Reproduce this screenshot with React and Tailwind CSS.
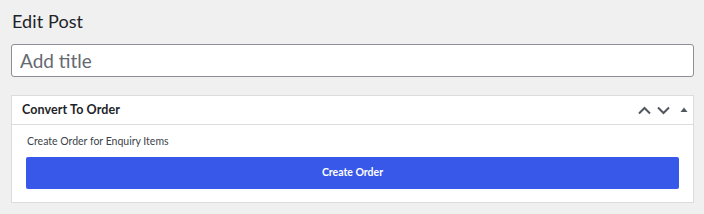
import React from 'react';

export default function App() {
  return (
    <main className="min-h-[214px] bg-[#f0f0f1] px-[11px] pt-[9px] font-['Lato',sans-serif]">
      <h1 className="text-[18px] leading-[24px] text-[#1d2327] pl-px tracking-[0.1px]">Edit Post</h1>

      <input
        type="text"
        placeholder="Add title"
        className="mt-[11px] block w-[683px] h-[33px] border border-[#8c8f94] rounded-[3px] bg-white px-[8px] text-[19px] text-[#1d2327] placeholder:text-[#646970] outline-none"
      />

      <section className="mt-[18px] w-[683px] border border-[#dcdcde] bg-white">
        <div className="flex items-center h-[29px] border-b border-[#dcdcde] pl-[10px] pr-[5px]">
          <h2 className="text-[12.5px] font-bold text-[#1d2327] tracking-[0.1px]">Convert To Order</h2>
          <div className="ml-auto flex items-center text-[#50575e]">
            <svg width="13" height="13" viewBox="0 0 13 13" fill="none" stroke="currentColor" strokeWidth="2">
              <path d="M1 9.5 6.5 4l5.5 5.5" />
            </svg>
            <svg width="13" height="13" viewBox="0 0 13 13" fill="none" stroke="currentColor" strokeWidth="2" className="ml-[6px]">
              <path d="M1 3.5 6.5 9 12 3.5" />
            </svg>
            <svg width="8" height="13" viewBox="0 0 8 13" fill="currentColor" className="ml-[10px]">
              <path d="M4 3.5 7.5 8H0.5z" />
            </svg>
          </div>
        </div>
        <div className="px-[14px] pt-[9px] pb-[13px]">
          <p className="text-[10.5px] leading-[14px] text-[#3c434a] pl-px">Create Order for Enquiry Items</p>
          <button className="mt-[9px] w-full h-[32px] rounded-[2px] bg-[#3858e9] text-white text-[10.5px] font-bold">
            Create Order
          </button>
        </div>
      </section>
    </main>
  );
}
